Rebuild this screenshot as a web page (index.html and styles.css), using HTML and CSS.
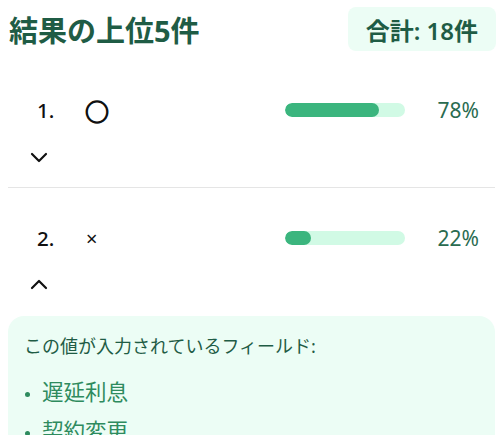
FILE: index.html
```html
<!DOCTYPE html>
<html lang="ja">
<head>
<meta charset="utf-8">
<link rel="stylesheet" href="styles.css">
</head>
<body>
<div class="panel">
  <header class="head">
    <h2 class="title">結果の上位5件</h2>
    <div class="badge">合計: 18件</div>
  </header>

  <div class="item">
    <div class="row">
      <span class="rank">1.</span>
      <span class="value circle">○</span>
      <div class="bar"><div class="fill" style="width:78%"></div></div>
      <span class="pct">78%</span>
    </div>
    <button class="toggle" aria-label="展開">
      <svg width="18" height="12" viewBox="0 0 18 12"><path d="M2 3 L9 10 L16 3" fill="none" stroke="#111" stroke-width="2.2" stroke-linecap="round" stroke-linejoin="round"/></svg>
    </button>
  </div>

  <div class="item open">
    <div class="row">
      <span class="rank">2.</span>
      <span class="value cross">×</span>
      <div class="bar"><div class="fill" style="width:22%"></div></div>
      <span class="pct">22%</span>
    </div>
    <button class="toggle" aria-label="折りたたむ">
      <svg width="18" height="12" viewBox="0 0 18 12"><path d="M2 9 L9 2 L16 9" fill="none" stroke="#111" stroke-width="2.2" stroke-linecap="round" stroke-linejoin="round"/></svg>
    </button>
    <div class="details">
      <p class="details-title">この値が入力されているフィールド:</p>
      <ul class="fields">
        <li>遅延利息</li>
        <li>契約変更</li>
      </ul>
    </div>
  </div>
</div>
</body>
</html>
```

FILE: styles.css
```css
html, body {
  margin: 0;
  padding: 0;
  background: #ffffff;
}
body {
  font-family: "Noto Sans", "Noto Sans CJK JP", sans-serif;
  color: #111;
}
.panel {
  padding: 0 4px 0 8px;
}
.head {
  height: 60px;
  display: flex;
  align-items: center;
  justify-content: space-between;
}
.title {
  margin: 2px 0 0 1px;
  font-size: 29px;
  font-weight: 700;
  color: #1f5c45;
  font-family: "Noto Sans", "Noto Sans CJK JP", sans-serif;
  line-height: 1.2;
}
.badge {
  background: #ecfdf5;
  color: #1f5c45;
  border-radius: 8px;
  padding: 0 18px;
  height: 44px;
  margin-top: -2px;
  display: flex;
  align-items: center;
  font-size: 24px;
  font-weight: 600;
  margin-right: -1px;
}
.item {
  padding: 32px 0 16px;
  border-bottom: 1px solid #e5e5e5;
}
.item.open {
  border-bottom: none;
}
.row {
  height: 36px;
  display: flex;
  align-items: center;
  padding-left: 29px;
}
.rank {
  width: 49px;
  font-size: 20.5px;
  font-weight: 500;
}
.value {
  flex: 1;
  font-size: 20px;
}
.circle {
  font-family: "Noto Sans CJK JP", sans-serif;
  font-size: 24px;
  font-weight: 700;
  -webkit-text-stroke: 1.2px #111;
  margin-left: -1px;
}
.bar {
  width: 120px;
  height: 14px;
  border-radius: 7px;
  background: #d1fae5;
  overflow: hidden;
}
.fill {
  height: 100%;
  background: #3bb57e;
  border-radius: 7px;
}
.pct {
  width: 90px;
  text-align: right;
  font-size: 21px;
  color: #2a6b50;
  padding-right: 16px;
  box-sizing: border-box;
}
.toggle {
  display: flex;
  align-items: center;
  justify-content: center;
  margin: 15px 0 0 13px;
  width: 36px;
  height: 28px;
  padding: 0;
  border: none;
  background: transparent;
}
.details {
  margin-top: 17px;
  background: #ecfdf5;
  border-radius: 16px;
  padding: 16px 16px 16px;
}
.details-title {
  margin: 0 0 14px;
  font-size: 18px;
  color: #1f5c45;
}
.fields {
  margin: 0;
  padding: 0 0 0 18px;
  color: #2e8b5e;
  font-size: 21.5px;
  line-height: 39px;
}
.fields li::marker {
  font-size: 14px;
}
```
